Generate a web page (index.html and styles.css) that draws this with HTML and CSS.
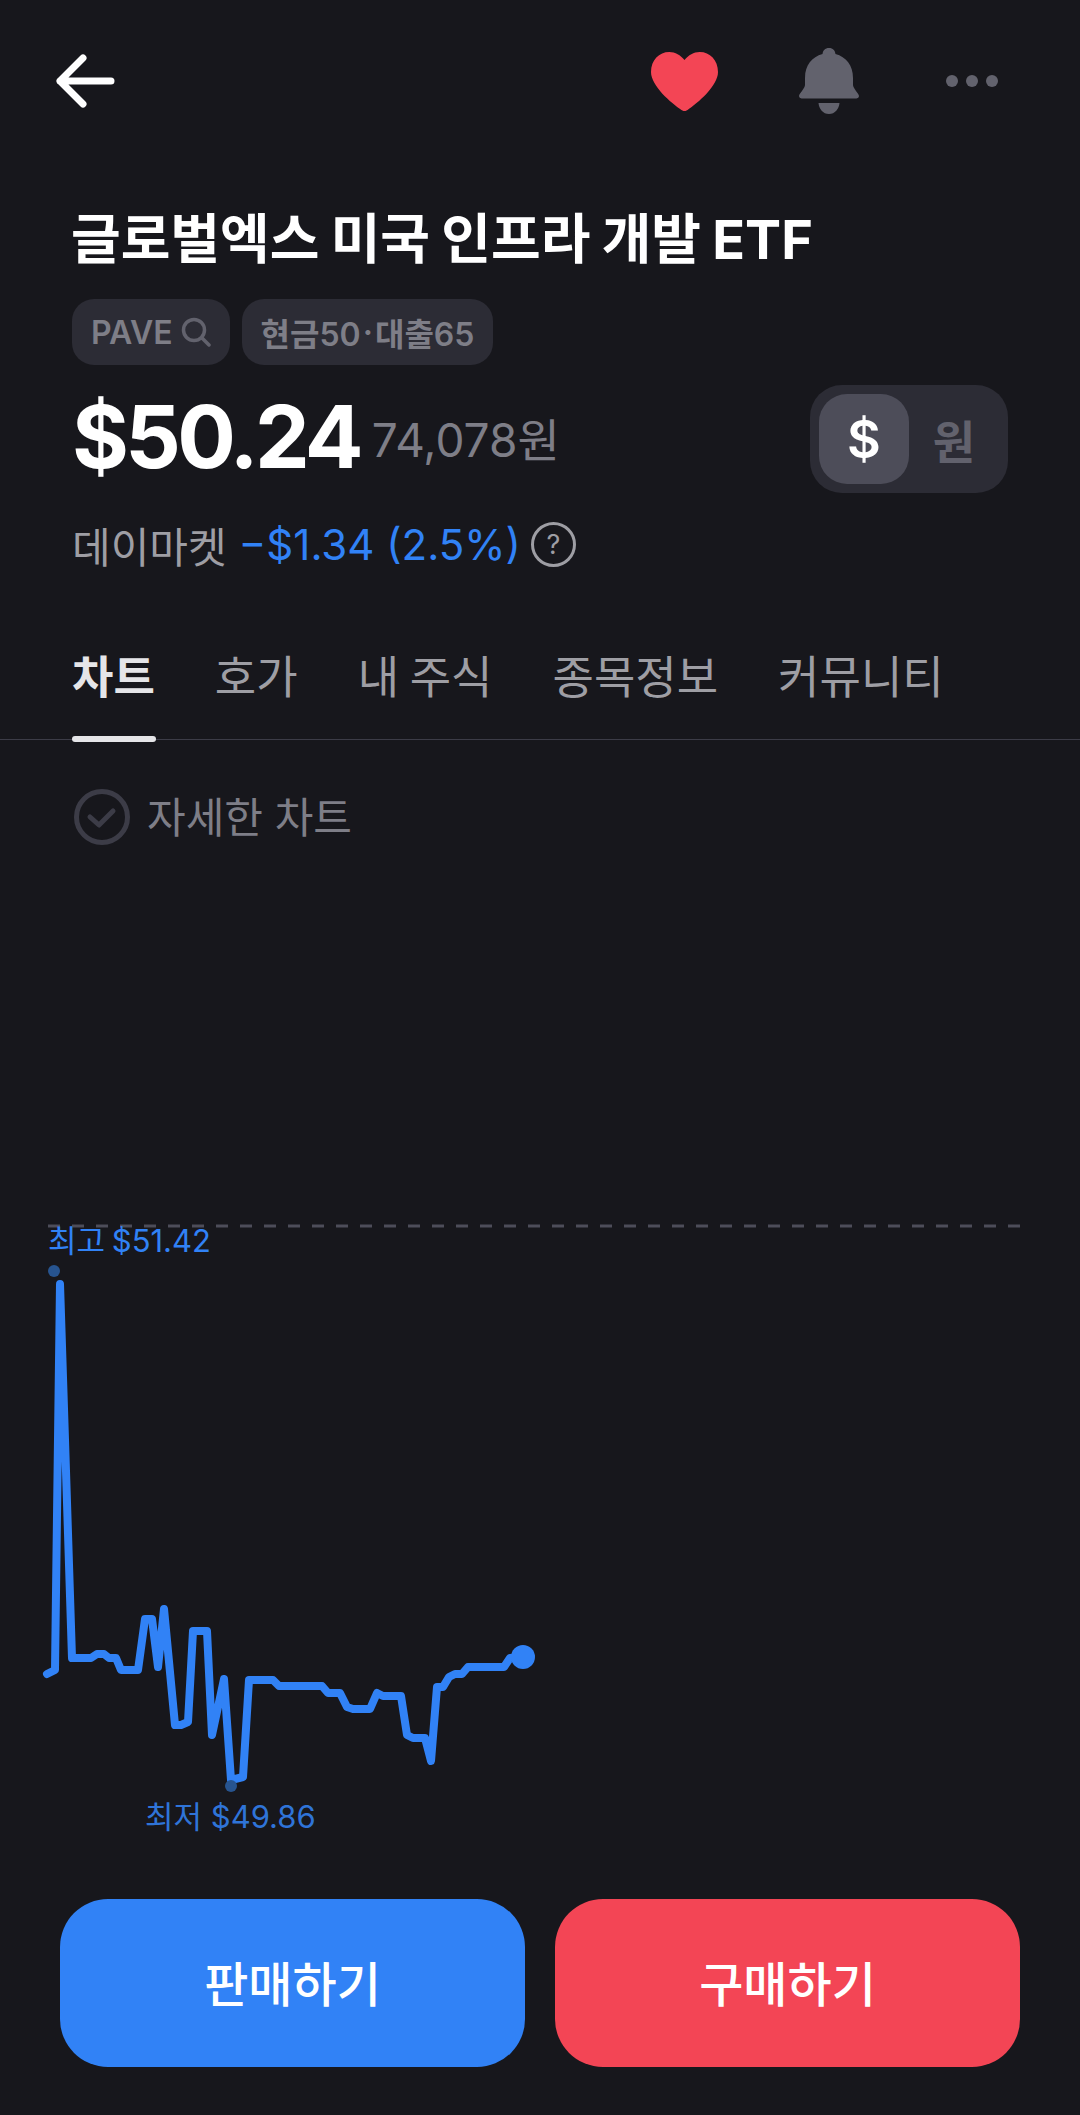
FILE: index.html
```html
<!DOCTYPE html>
<html lang="ko">
<head>
  <meta charset="UTF-8">
  <meta name="viewport" content="width=device-width, initial-scale=1.0">
  <title>PAVE</title>
  <link rel="stylesheet" href="styles.css">
</head>
<body>
  <div class="page">
    <header class="topbar">
      <svg viewBox="0 0 62 54" width="62" height="54">
        <path d="M29 4 L6 27 L29 50 M6 27 H57" fill="none" stroke="#fff" stroke-width="7" stroke-linecap="round" stroke-linejoin="round"/>
      </svg>
      <div class="topbar-actions">
        <svg viewBox="0 0 66 59" width="67" height="59" preserveAspectRatio="none">
          <path d="M33 8 C29 3 24 0 18 0 C8 0 0 8 0 20 C0 34 20 51 30 58 C32 59.5 34 59.5 36 58 C46 51 66 34 66 20 C66 8 58 0 48 0 C42 0 37 3 33 8 Z" fill="#f34555"/>
        </svg>
        <svg viewBox="0 0 60 66" width="60" height="66">
          <path d="M30 0 C34 0 36 2.5 36.5 6 C47 9 54 17 54 30 V37 C54 40 60 46 60 48 C60 50 58 50.5 56 50.5 H4 C2 50.5 0 50 0 48 C0 46 6 40 6 37 V30 C6 17 13 9 23.5 6 C24 2.5 26 0 30 0 Z M19.5 55 H40.5 C40 61 36 66 30 66 C24 66 20 61 19.5 55 Z" fill="#62626d"/>
        </svg>
        <div class="dots"><span></span><span></span><span></span></div>
      </div>
    </header>

    <h1 class="title">글로벌엑스 미국 인프라 개발 ETF</h1>

    <div class="chips">
      <div class="chip">PAVE
        <svg viewBox="0 0 30 30" width="30" height="30">
          <circle cx="13" cy="13" r="10.5" fill="none" stroke="#62626d" stroke-width="3.5"/>
          <path d="M21 21 L28 28" stroke="#62626d" stroke-width="3.5" stroke-linecap="round"/>
        </svg>
      </div>
      <div class="chip">현금50<span class="chip-dot">·</span>대출65</div>
    </div>

    <div class="price-row">
      <div class="price">
        <span class="price-usd">$50.24</span>
        <span class="price-krw">74,078원</span>
      </div>
      <div class="toggle">
        <span class="toggle-item toggle-on">$</span>
        <span class="toggle-item">원</span>
      </div>
    </div>

    <div class="daymarket">
      <span>데이마켓</span>
      <span class="change">−$1.34 (2.5%)</span>
      <span class="help">?</span>
    </div>

    <nav class="tabs">
      <a class="tab tab-on" href="#">차트</a>
      <a class="tab" href="#">호가</a>
      <a class="tab" href="#">내 주식</a>
      <a class="tab" href="#">종목정보</a>
      <a class="tab" href="#">커뮤니티</a>
    </nav>

    <div class="detail">
      <svg viewBox="0 0 56 56" width="56" height="56">
        <circle cx="28" cy="28" r="25.5" fill="none" stroke="#3c3c47" stroke-width="5"/>
        <path d="M16 28 L25 36 L39 22" fill="none" stroke="#3c3c47" stroke-width="5" stroke-linecap="round" stroke-linejoin="round"/>
      </svg>
      <span class="detail-text">자세한 차트</span>
    </div>

    <!-- free canvas, viewBox uses page coordinates -->
    <svg class="chart" viewBox="0 845 1080 1054" width="1080" height="1054">
      <line x1="48" y1="1226" x2="1020" y2="1226" stroke="#4d4d59" stroke-width="3" stroke-dasharray="12 12"/>
      <text class="chart-label" x="48" y="1252">최고 $51.42</text>
      <circle cx="54" cy="1271" r="6" fill="#27548f"/>
      <polyline fill="none" stroke="#3182f6" stroke-width="8" stroke-linecap="round" stroke-linejoin="round"
        points="47,1674 55,1670 60,1284 72,1658 91,1658 97,1654 104,1654 109,1658 116,1658 121,1670 138,1670 145,1619 152,1619 158,1667 164,1609 175,1725 181,1725 188,1722 193,1631 207,1631 212,1735 224,1679 231,1780 243,1777 249,1680 273,1680 279,1686 322,1686 328,1693 340,1693 347,1707 353,1709 370,1709 377,1693 383,1696 401,1696 407,1735 413,1738 425,1738 431,1761 437,1687 443,1687 449,1677 455,1674 462,1674 468,1667 504,1667 510,1658 522,1657"/>
      <circle cx="523" cy="1657" r="12" fill="#3182f6"/>
      <circle cx="231" cy="1786" r="6" fill="#27548f"/>
      <text class="chart-label chart-label-low" x="145" y="1828">최저 $49.86</text>
    </svg>

    <div class="actions">
      <button class="btn btn-sell">판매하기</button>
      <button class="btn btn-buy">구매하기</button>
    </div>
  </div>
</body>
</html>
```
FILE: styles.css
```css
body {
  margin: 0;
  background: #17171c;
  font-family: Inter, "Noto Sans CJK KR", sans-serif;
  color: #fff;
}
.page {
  width: 1080px;
  height: 2115px;
  overflow: hidden;
}
.topbar {
  display: flex;
  align-items: center;
  justify-content: space-between;
  height: 66px;
  padding: 48px 82px 0 54px;
}
.topbar-actions {
  display: flex;
  align-items: center;
  gap: 81px;
}
.dots {
  display: flex;
  gap: 8px;
  margin-left: 6px;
}
.dots span {
  width: 12px;
  height: 12px;
  border-radius: 50%;
  background: #62626d;
}
.title {
  margin: 0;
  padding: 92px 0 0 71px;
  height: 67px;
  line-height: 67px;
  font-size: 54px;
  font-weight: 700;
  word-spacing: -1.5px;
  white-space: nowrap;
}
.chips {
  display: flex;
  gap: 12px;
  margin: 26px 0 0 72px;
}
.chip {
  display: flex;
  align-items: center;
  gap: 8px;
  height: 66px;
  padding: 0 19px;
  border-radius: 22px;
  background: #2c2c35;
  color: #7e7e87;
  font-size: 32px;
  font-weight: 600;
}
.chip-dot {
  margin: 0 -6px;
}
.price-row {
  display: flex;
  align-items: center;
  justify-content: space-between;
  height: 108px;
  margin: 20px 72px 0 72px;
}
.price {
  display: flex;
  align-items: center;
  gap: 12px;
  margin-bottom: 5px;
}
.price-usd {
  font-size: 87px;
  font-weight: 700;
  letter-spacing: -3.7px;
}
.price-krw {
  font-size: 46px;
  color: #7e7e87;
}
.toggle {
  display: flex;
  align-items: center;
  height: 108px;
  padding: 0 9px;
  border-radius: 32px;
  background: #2c2c35;
}
.toggle-item {
  display: flex;
  align-items: center;
  justify-content: center;
  width: 90px;
  height: 90px;
  color: #62626d;
  font-size: 46px;
  font-weight: 700;
}
.toggle-on {
  border-radius: 28px;
  background: #4d4d59;
  color: #fff;
  font-size: 52px;
  font-weight: 600;
}
.daymarket {
  display: flex;
  align-items: center;
  gap: 12px;
  height: 46px;
  margin: 28px 0 0 72px;
  font-size: 42px;
  color: #9e9ea4;
}
.change {
  color: #3182f6;
}
.help {
  display: flex;
  align-items: center;
  justify-content: center;
  box-sizing: border-box;
  width: 45px;
  height: 45px;
  margin-left: -2px;
  border: 3px solid #9e9ea4;
  border-radius: 50%;
  font-size: 27px;
}
.tabs {
  display: flex;
  gap: 60px;
  height: 99px;
  margin-top: 73px;
  padding-left: 72px;
  border-bottom: 1px solid #3c3c47;
}
.tab {
  position: relative;
  height: 99px;
  color: #9e9ea4;
  font-size: 45px;
  line-height: 76px;
  text-decoration: none;
  word-spacing: -2px;
  white-space: nowrap;
}
.tab-on {
  color: #e5e5e8;
  font-weight: 700;
}
.tab-on::after {
  content: "";
  position: absolute;
  left: 0;
  right: -1px;
  bottom: -3px;
  height: 6px;
  border-radius: 3px;
  background: #e5e5e8;
}
.detail {
  display: flex;
  align-items: center;
  gap: 17px;
  height: 56px;
  margin: 49px 0 0 74px;
  color: #7e7e87;
  font-size: 42px;
}
.detail-text {
  margin-bottom: 5px;
}
.chart {
  display: block;
}
.chart-label {
  fill: #3182f6;
  font-size: 31px;
  word-spacing: -2px;
}
.chart-label-low {
  fill: #2f74d8;
  word-spacing: 0;
}
.actions {
  display: flex;
  gap: 30px;
  padding: 0 60px;
}
.btn {
  flex: 1;
  height: 168px;
  padding-bottom: 6px;
  border: none;
  border-radius: 48px;
  color: #fff;
  font-family: inherit;
  font-size: 48px;
  font-weight: 500;
}
.btn-sell {
  background: #3182f6;
}
.btn-buy {
  background: #f34555;
}
```
